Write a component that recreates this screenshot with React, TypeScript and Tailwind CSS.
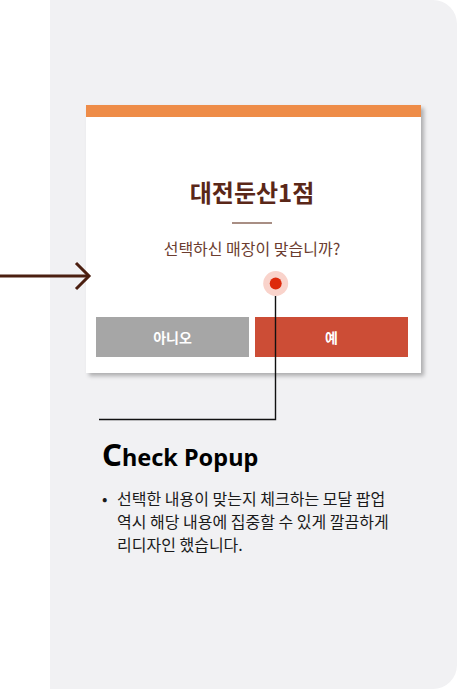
const ko = { fontFamily: '"Noto Sans CJK KR", "Noto Sans", sans-serif' };
const en = { fontFamily: '"Noto Sans", "Open Sans", sans-serif' };

function Modal() {
  return (
    <div className="w-[335px] bg-white shadow-[3px_3px_4px_rgba(0,0,0,0.28)]" style={ko}>
      <div className="h-3 bg-[#ee8c48]" />
      <div className="flex flex-col items-center pt-[60px] pb-4 pl-[10px] pr-[13px]">
        <h2 className="text-[24px] font-bold leading-[30px] text-[#5a2718]">대전둔산1점</h2>
        <div className="mt-[15px] h-[2px] w-10 bg-[#a88e84]" />
        <p className="mt-[13px] text-[16px] leading-[22px] text-[#6b3c2f]">선택하신 매장이 맞습니까?</p>
        <div className="mt-[58px] flex w-full gap-[6px]">
          <button className="h-10 flex-1 bg-[#a6a6a6] text-[14px] font-bold text-white">아니오</button>
          <button className="h-10 flex-1 bg-[#cc4d36] text-[14px] font-bold text-white">예</button>
        </div>
      </div>
    </div>
  );
}

function Annotations() {
  return (
    <svg className="pointer-events-none absolute inset-0" width="457" height="689" viewBox="0 0 457 689">
      <line x1="0" y1="276" x2="88" y2="276" stroke="#4b1f10" strokeWidth="3" />
      <polyline points="76,263 89,276 76,289" fill="none" stroke="#4b1f10" strokeWidth="3" />
      <polyline points="275.5,296 275.5,419.5 99,419.5" fill="none" stroke="#111" strokeWidth="1.4" />
      <circle cx="275.7" cy="283.5" r="12.5" fill="#f9d3cb" />
      <circle cx="275.7" cy="283.5" r="6" fill="#dd2a0c" />
    </svg>
  );
}

export default function App() {
  return (
    <div className="relative flex h-[689px] w-[457px] overflow-hidden bg-white">
      <div className="w-[50px] shrink-0" />
      <div className="flex flex-1 flex-col rounded-r-[24px] bg-[#f1f1f3]">
        <div className="ml-9 mt-[105px]">
          <Modal />
        </div>
        <div className="ml-[52px] mt-[63px]">
          <h3 className="flex items-baseline font-bold leading-[36px] text-black" style={en}>
            <span className="text-[31px]">C</span>
            <span className="text-[23.5px]">heck Popup</span>
          </h3>
          <div className="mt-[12px] flex text-[16px] leading-[23px] text-[#1a1a1a]" style={ko}>
            <span className="w-[15px] shrink-0">•</span>
            <p>
              선택한 내용이 맞는지 체크하는 모달 팝업
              <br />
              역시 해당 내용에 집중할 수 있게 깔끔하게
              <br />
              리디자인 했습니다.
            </p>
          </div>
        </div>
      </div>
      <Annotations />
    </div>
  );
}
